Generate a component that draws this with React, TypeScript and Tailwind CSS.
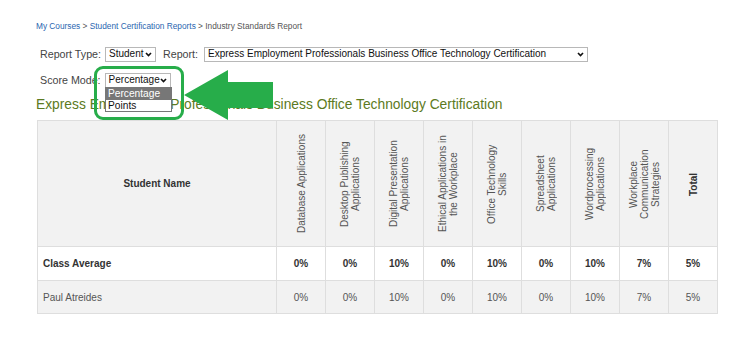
const skills = [
  ['Database Applications', false],
  ['Desktop Publishing Applications', false],
  ['Digital Presentation Applications', false],
  ['Ethical Applications in the Workplace', false],
  ['Office Technology Skills', false],
  ['Spreadsheet Applications', false],
  ['Wordprocessing Applications', false],
  ['Workplace Communication Strategies', false],
  ['Total', true],
] as const;

const average = ['0%', '0%', '10%', '0%', '10%', '0%', '10%', '7%', '5%'];
const students = [{name: 'Paul Atreides', scores: ['0%', '0%', '10%', '0%', '10%', '0%', '10%', '7%', '5%']}];

function Chevron() {
  return (
    <svg width="7" height="5" viewBox="0 0 7 5" className="shrink-0">
      <path d="M1 1 L3.5 3.6 L6 1" fill="none" stroke="#111" strokeWidth="1.6" />
    </svg>
  );
}

function FakeSelect({value, width}: {value: string; width: string}) {
  return (
    <div className={`${width} h-[15px] bg-white border border-[#b8b8b8] flex items-center justify-between pl-[3px] pr-[3px] text-[10px] text-[#111]`}>
      <span className="leading-none">{value}</span>
      <Chevron />
    </div>
  );
}

export default function App() {
  return (
    <div className="relative w-[750px] h-[339px] bg-white overflow-hidden pt-[20px] pl-[36px] font-['Liberation_Sans',Arial,sans-serif]">
      <div className="text-[8.3px] leading-[12px] text-[#555]">
        <span className="text-[#2a66b0]">My Courses</span>
        {' > '}
        <span className="text-[#2a66b0]">Student Certification Reports</span>
        {' > Industry Standards Report'}
      </div>

      <div className="mt-[14px] pl-[4px] flex items-center text-[10.7px] text-[#444]">
        <span>Report Type:</span>
        <div className="ml-[4px]">
          <FakeSelect value="Student" width="w-[51px]" />
        </div>
        <span className="ml-[7px]">Report:</span>
        <div className="ml-[6px]">
          <FakeSelect value="Express Employment Professionals Business Office Technology Certification" width="w-[384px]" />
        </div>
      </div>

      <div className="mt-[10px] pl-[4px] flex items-center text-[10.7px] text-[#444]">
        <span>Score Mode:</span>
        <div className="ml-[4px]">
          <FakeSelect value="Percentage" width="w-[66px]" />
        </div>
      </div>

      <div className="mt-[9px] text-[13.8px] leading-[16px] text-[#5c7a22]">
        Express Employment Professionals Business Office Technology Certification
      </div>

      <table className="mt-[7px] ml-[1px] border-collapse table-fixed text-[10px] text-[#555]">
        <colgroup>
          <col className="w-[239px]" />
          {skills.map(([s]) => (
            <col key={s} className="w-[49px]" />
          ))}
        </colgroup>
        <thead>
          <tr className="h-[126px] bg-[#f2f2f2]">
            <th className="border border-[#dedede] font-bold text-[#333] text-center">Student Name</th>
            {skills.map(([s, bold]) => (
              <th key={s} className="border border-[#dedede] p-0">
                <div className="flex items-center justify-center">
                  <div
                    className={`h-[102px] [writing-mode:vertical-rl] rotate-180 text-center leading-[11px] ${bold ? 'font-bold text-[#333]' : 'font-normal'}`}
                  >
                    {s}
                  </div>
                </div>
              </th>
            ))}
          </tr>
        </thead>
        <tbody>
          <tr className="h-[34px] bg-white font-bold text-[#333]">
            <td className="border border-[#dedede] pl-[5px]">Class Average</td>
            {average.map((v, i) => (
              <td key={i} className="border border-[#dedede] text-center">{v}</td>
            ))}
          </tr>
          {students.map((st) => (
            <tr key={st.name} className="h-[33px] bg-[#f2f2f2]">
              <td className="border border-[#dedede] pl-[5px]">{st.name}</td>
              {st.scores.map((v, i) => (
                <td key={i} className="border border-[#dedede] text-center">{v}</td>
              ))}
            </tr>
          ))}
        </tbody>
      </table>

      {/* open dropdown list */}
      <div className="absolute left-[105px] top-[87px] w-[67px] bg-white border border-[#777] text-[10.2px] leading-[11.5px]">
        <div className="bg-[#777] text-white pl-[2px]">Percentage</div>
        <div className="text-[#111] pl-[2px]">Points</div>
      </div>

      {/* green callout */}
      <div className="absolute left-[94px] top-[66px] w-[90px] h-[54px] border-[3px] border-[#27ad4a] rounded-[9px]" />
      <svg className="absolute left-0 top-0" width="750" height="339" viewBox="0 0 750 339">
        <polygon points="184,95 228,70 228,82 273,82 273,108 228,108 228,120" fill="#27ad4a" />
      </svg>
    </div>
  );
}
